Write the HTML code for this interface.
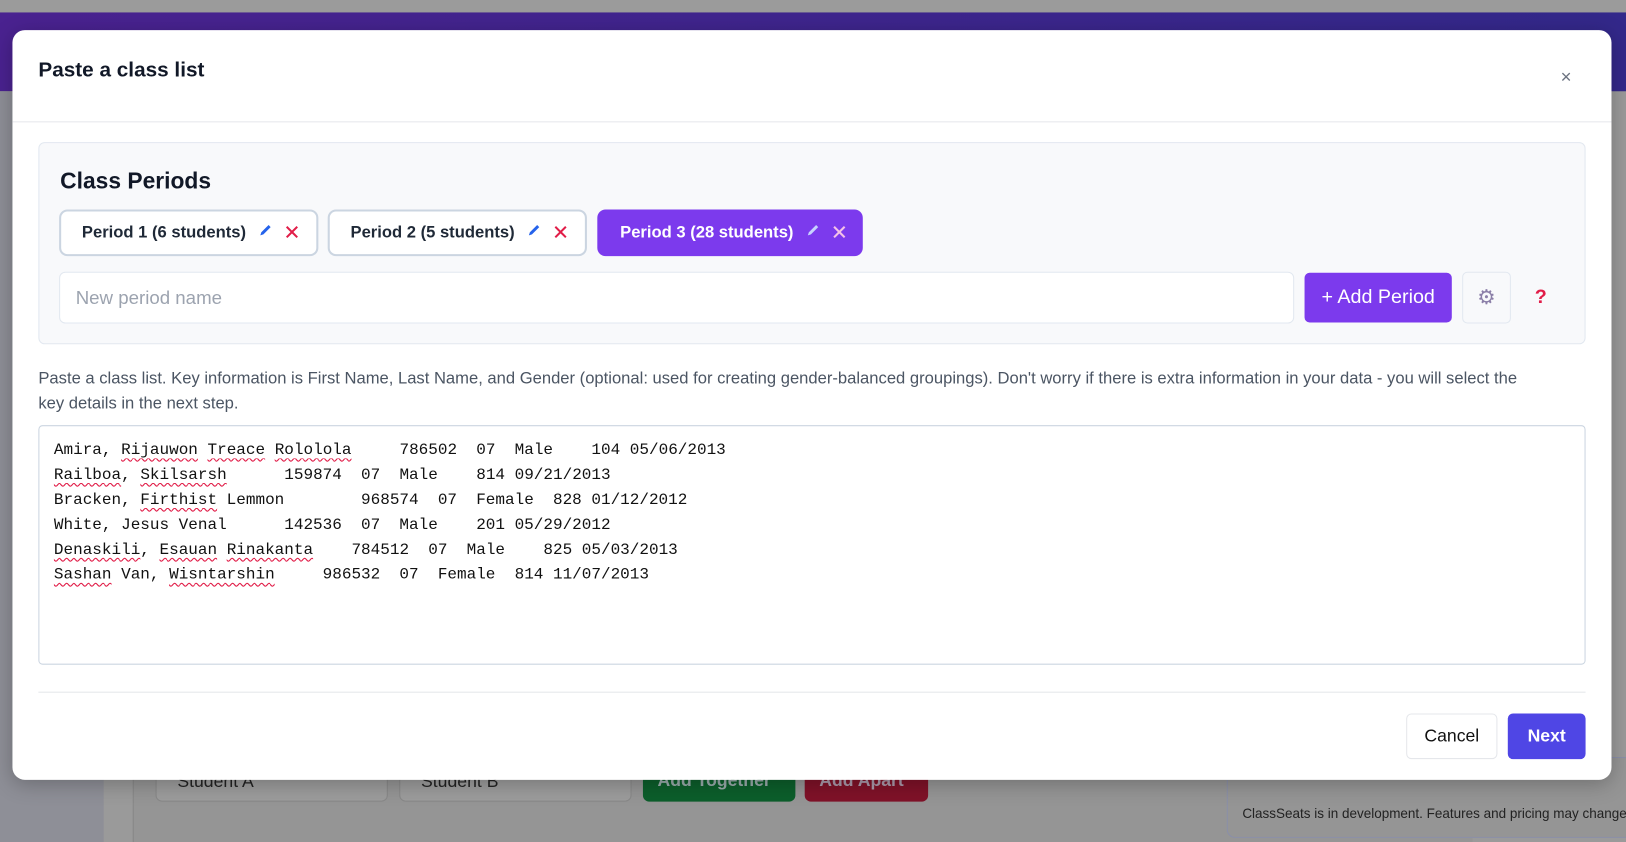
<!DOCTYPE html>
<html><head><meta charset="utf-8"><style>
*{box-sizing:border-box;margin:0;padding:0}
body{width:1626px;height:812px;overflow:hidden;background:#9a9a9a;font-family:"Liberation Sans",sans-serif;position:relative}
#w{position:absolute;left:0;top:0;width:1568px;height:783px;transform:scale(1.037);transform-origin:0 0}
.abs{position:absolute}
.modal{left:12px;top:29px;width:1542px;height:723px;background:#fff;border-radius:12px;box-shadow:0 4px 20px rgba(0,0,0,.25)}
.chip{position:absolute;top:202px;height:45px;border:2px solid #cbd5e1;border-radius:8px;background:#fff;font-size:16px;font-weight:bold;color:#1f2937;display:flex;align-items:center;padding-left:20px}
.x{color:#e11d48;font-size:20px;margin-left:10px;font-weight:normal}
.pen{margin-left:12px}
pre{font-family:"Liberation Mono",monospace;font-size:15.43px;line-height:24.1px;color:#111}
.sq{text-decoration:underline wavy #e11d48;text-underline-offset:3px;text-decoration-thickness:1px}
</style></head><body>
<div id="w">
<div class="abs" style="left:0;top:0;width:1568px;height:12px;background:#9b9b9b"></div>
<div class="abs" style="left:0;top:12px;width:1568px;height:76px;background:linear-gradient(90deg,#4a2290,#33288a)"></div>
<div class="abs" style="left:0;top:88px;width:100px;height:724px;background:#8e8f97"></div>
<div class="abs" style="left:128px;top:740px;width:1292px;height:72px;background:#959595;border-left:1px solid #888"></div>
<div class="abs" style="left:150px;top:735px;width:224px;height:38px;background:#9c9c9c;border:1px solid #888;border-radius:6px;font-size:17px;color:#222;padding:8px 20px">Student A</div>
<div class="abs" style="left:385px;top:735px;width:224px;height:38px;background:#9c9c9c;border:1px solid #888;border-radius:6px;font-size:17px;color:#222;padding:8px 20px">Student B</div>
<div class="abs" style="left:620px;top:735px;width:147px;height:38px;background:#0c5e2b;border-radius:6px;font-size:17px;color:#9aa;font-weight:bold;padding:8px 14px">Add Together</div>
<div class="abs" style="left:776px;top:735px;width:119px;height:38px;background:#7f1228;border-radius:6px;font-size:17px;color:#a9a;font-weight:bold;padding:8px 14px">Add Apart</div>
<div class="abs" style="left:1183px;top:730px;width:443px;height:78px;background:#959595;border:1px solid #8a8fa8;border-radius:8px;font-size:13px;color:#222;padding:46px 14px 0">ClassSeats is in development. Features and pricing may change.</div>

<div class="abs modal">
  <div class="abs" style="left:25px;top:28px;font-size:20px;font-weight:bold;color:#111827">Paste a class list</div>
  <div class="abs" style="left:1493px;top:35px;font-size:18px;color:#6b7280">×</div>
  <div class="abs" style="left:0;top:88px;width:1542px;height:1px;background:#e5e7eb"></div>
  <div class="abs" style="left:25px;top:108px;width:1492px;height:195px;background:#f8f9fb;border:1px solid #e2e8f0;border-radius:6px"></div>
  <div class="abs" style="left:46px;top:133px;font-size:22px;font-weight:bold;color:#111827">Class Periods</div>
</div>
<div class="chip" style="left:57px;width:250px">Period 1 (6 students)<span class="pen"><svg width="14" height="14" viewBox="0 0 14 14"><path d="M2 12l1-3 7-7 2 2-7 7z" fill="#2563eb"/></svg></span><span class="x">✕</span></div>
<div class="chip" style="left:316px;width:250px">Period 2 (5 students)<span class="pen"><svg width="14" height="14" viewBox="0 0 14 14"><path d="M2 12l1-3 7-7 2 2-7 7z" fill="#2563eb"/></svg></span><span class="x">✕</span></div>
<div class="chip" style="left:576px;width:256px;background:#7c3aed;border-color:#7c3aed;color:#fff">Period 3 (28 students)<span class="pen"><svg width="14" height="14" viewBox="0 0 14 14"><path d="M2 12l1-3 7-7 2 2-7 7z" fill="#c7d2fe"/></svg></span><span class="x" style="color:#f5c2e7">✕</span></div>
<div class="abs" style="left:57px;top:262px;width:1191px;height:50px;background:#fff;border:1px solid #e2e8f0;border-radius:6px;font-size:18px;color:#9ca3af;padding:14px 15px">New period name</div>
<div class="abs" style="left:1258px;top:263px;width:142px;height:48px;background:#7c3aed;border-radius:5px;color:#fff;font-size:19px;text-align:center;line-height:48px">+ Add Period</div>
<div class="abs" style="left:1410px;top:262px;width:47px;height:50px;background:#f8f9fb;border:1px solid #e2e8f0;border-radius:5px;text-align:center;line-height:48px;font-size:20px;color:#8b7fa8">⚙</div>
<div class="abs" style="left:1480px;top:276px;font-size:19px;font-weight:bold;color:#e11d48">?</div>
<div class="abs" style="left:37px;top:354px;width:1440px;font-size:16px;line-height:24px;color:#4b5563">Paste a class list. Key information is First Name, Last Name, and Gender (optional: used for creating gender-balanced groupings). Don't worry if there is extra information in your data - you will select the key details in the next step.</div>
<div class="abs" style="left:37px;top:410px;width:1492px;height:231px;border:1px solid #cbd5e1;border-radius:4px;padding:11px 14px">
<pre>Amira, <span class="sq">Rijauwon</span> <span class="sq">Treace</span> <span class="sq">Rololola</span>     786502  07  Male    104 05/06/2013
<span class="sq">Railboa</span>, <span class="sq">Skilsarsh</span>      159874  07  Male    814 09/21/2013
Bracken, <span class="sq">Firthist</span> Lemmon        968574  07  Female  828 01/12/2012
White, Jesus Venal      142536  07  Male    201 05/29/2012
<span class="sq">Denaskili</span>, <span class="sq">Esauan</span> <span class="sq">Rinakanta</span>    784512  07  Male    825 05/03/2013
<span class="sq">Sashan</span> Van, <span class="sq">Wisntarshin</span>     986532  07  Female  814 11/07/2013</pre>
</div>
<div class="abs" style="left:37px;top:667px;width:1492px;height:1px;background:#e5e7eb"></div>
<div class="abs" style="left:1356px;top:688px;width:88px;height:44px;border:1px solid #e5e7eb;border-radius:5px;background:#fff;font-size:17px;color:#111;text-align:center;line-height:42px">Cancel</div>
<div class="abs" style="left:1454px;top:688px;width:75px;height:44px;border-radius:5px;background:#4f46e5;font-size:17px;font-weight:bold;color:#fff;text-align:center;line-height:44px">Next</div>
</div>
</body></html>
